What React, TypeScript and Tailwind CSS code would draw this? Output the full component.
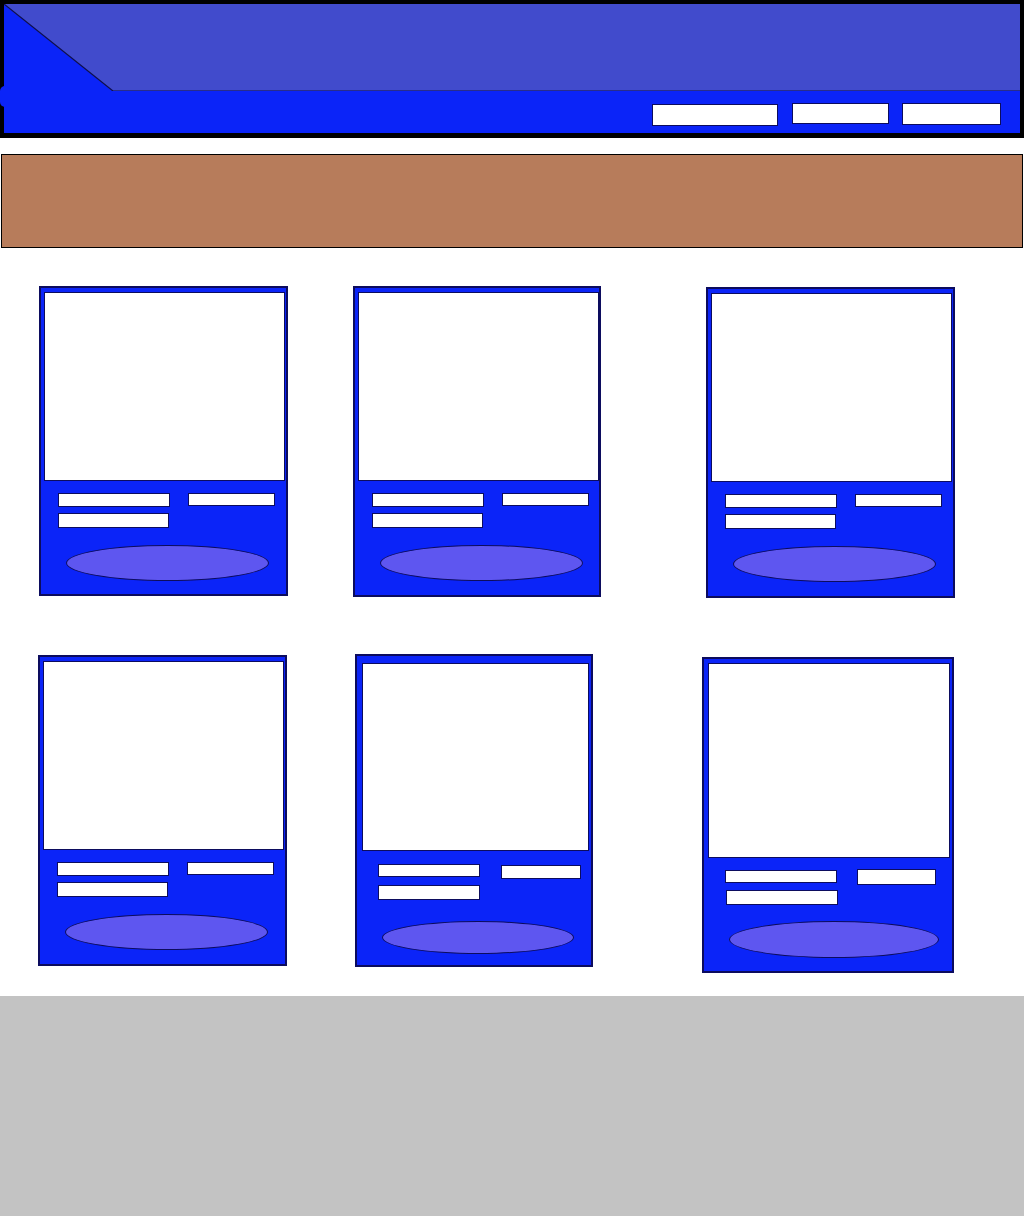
import React from "react";

type CardCfg = {
  outer: string;
  img: string;
  fieldsWrap: string;
  f1: string;
  f2: string;
  f3: string;
  ellipse: string;
};

const std: CardCfg = {
  outer: "w-[249px] h-[311px]",
  img: "mt-[4px] ml-[3px] w-[241px] h-[189px]",
  fieldsWrap: "ml-[17px] mt-[12px]",
  f1: "w-[112px] h-[14px]",
  f2: "ml-[18px] w-[87px] h-[13px]",
  f3: "mt-[6px] w-[111px] h-[15px]",
  ellipse: "mt-[17px] ml-[25px] w-[203px] h-[36px]",
};

const card1: CardCfg = { ...std, outer: "w-[249px] h-[310px]" };
const card2: CardCfg = { ...std, outer: "w-[248px] h-[311px]" };

const card5: CardCfg = {
  outer: "w-[238px] h-[313px]",
  img: "mt-[7px] ml-[5px] w-[227px] h-[188px]",
  fieldsWrap: "ml-[21px] mt-[13px]",
  f1: "w-[102px] h-[13px]",
  f2: "ml-[21px] mt-[1px] w-[80px] h-[14px]",
  f3: "mt-[6px] w-[102px] h-[15px]",
  ellipse: "mt-[21px] ml-[25px] w-[192px] h-[33px]",
};

const card6: CardCfg = {
  outer: "w-[252px] h-[316px]",
  img: "mt-[4px] ml-[4px] w-[242px] h-[195px]",
  fieldsWrap: "ml-[21px] mt-[11px]",
  f1: "w-[112px] h-[13px] mt-[1px]",
  f2: "ml-[20px] w-[79px] h-[16px]",
  f3: "mt-[5px] ml-[1px] w-[112px] h-[15px]",
  ellipse: "mt-[16px] ml-[25px] w-[210px] h-[37px]",
};

function Card({ cfg, className }: { cfg: CardCfg; className: string }) {
  return (
    <div
      className={`${cfg.outer} ${className} shrink-0 box-border border-2 border-[#0c0c5e] bg-[#0b24f8] flex flex-col`}
    >
      <div className={`${cfg.img} box-border bg-white border border-[#0c0c5e]`} />
      <div className={`${cfg.fieldsWrap} flex flex-col`}>
        <div className="flex items-start">
          <div className={`${cfg.f1} box-border bg-white border border-[#0c0c5e]`} />
          <div className={`${cfg.f2} box-border bg-white border border-[#0c0c5e]`} />
        </div>
        <div className={`${cfg.f3} box-border bg-white border border-[#0c0c5e]`} />
      </div>
      <div
        className={`${cfg.ellipse} box-border rounded-[50%] bg-[#5e56f0] border border-[#0c0c5e]`}
      />
    </div>
  );
}

export default function App() {
  return (
    <div className="w-[1024px] h-[1216px] bg-white overflow-hidden flex flex-col font-['Liberation_Sans',sans-serif]">
      {/* Header */}
      <header className="relative h-[138px] bg-black pt-[4px] pl-[4px] pr-[4px] pb-[5px] box-border shrink-0">
        <div className="flex flex-col h-full">
          <div className="relative h-[87px] bg-[#414bcc]">
            <svg
              className="absolute inset-0"
              width="1016"
              height="87"
              viewBox="0 0 1016 87"
            >
              <polygon points="0,0 109,87 0,87" fill="#0b24f8" />
              <polyline
                points="0,0 109,87 1016,87"
                fill="none"
                stroke="#10104a"
                strokeWidth="1.2"
              />
            </svg>
          </div>
          <div className="flex-1 bg-[#0b24f8] flex justify-end items-start pt-[12px] pr-[19px]">
            <button className="mt-[1px] w-[126px] h-[22px] box-border bg-white border border-[#0c0c5e]" />
            <button className="ml-[14px] w-[97px] h-[21px] box-border bg-white border border-[#0c0c5e]" />
            <button className="ml-[13px] w-[99px] h-[22px] box-border bg-white border border-[#0c0c5e]" />
          </div>
        </div>
        <div className="absolute left-0 top-[86px] w-[10px] h-[21px] rounded-full bg-[#0b24f8]" />
      </header>

      {/* Banner */}
      <div className="mt-[16px] mx-[1px] h-[94px] box-border bg-[#b77c5b] border border-black shrink-0" />

      {/* Row 1 */}
      <div className="mt-[38px] h-[312px] flex items-start shrink-0">
        <Card cfg={card1} className="ml-[39px]" />
        <Card cfg={card2} className="ml-[65px]" />
        <Card cfg={std} className="ml-[105px] mt-[1px]" />
      </div>

      {/* Row 2 */}
      <div className="mt-[56px] h-[319px] flex items-start shrink-0">
        <Card cfg={std} className="ml-[38px] mt-[1px]" />
        <Card cfg={card5} className="ml-[68px]" />
        <Card cfg={card6} className="ml-[109px] mt-[3px]" />
      </div>

      {/* Footer */}
      <footer className="mt-[23px] flex-1 bg-[#c3c3c3]" />
    </div>
  );
}
